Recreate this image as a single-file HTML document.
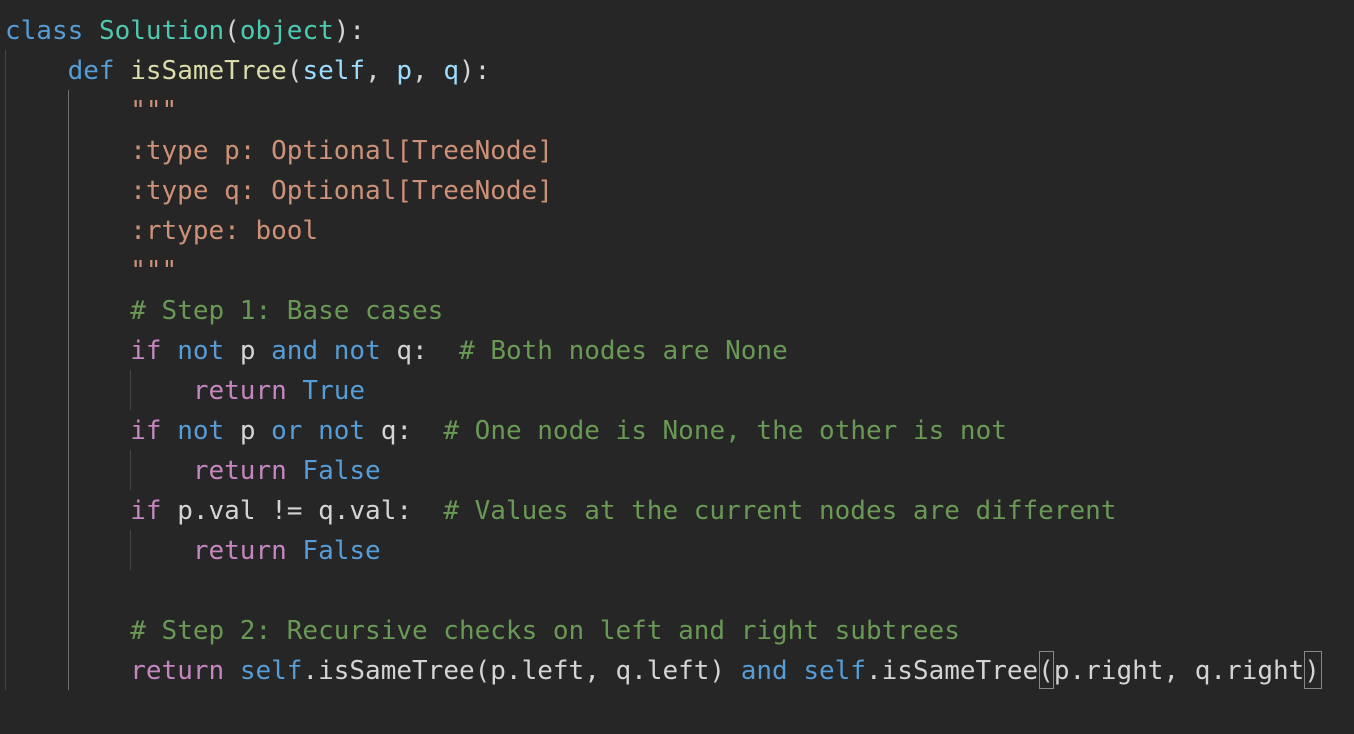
<!DOCTYPE html>
<html><head><style>
html,body{margin:0;padding:0;background:#262626;width:1354px;height:734px;overflow:hidden}
pre{margin:0;position:absolute;left:5px;top:11px;font-family:"DejaVu Sans Mono","Liberation Mono",monospace;font-size:26px;line-height:40px;color:#d4d4d4}
.k{color:#569cd6}.c{color:#4ec9b0}.f{color:#dcdcaa}.v{color:#9cdcfe}.s{color:#ce9178}.g{color:#6a9955}.p{color:#c586c0}
.gl{position:absolute;width:1px;background:#474747}
.bx{position:absolute;border:1px solid #888;box-sizing:border-box;height:38px;top:651px}
</style></head><body>
<div class="gl" style="left:5px;top:50px;height:640px"></div>
<div class="gl" style="left:68px;top:90px;height:600px;background:#707070"></div>
<div class="gl" style="left:130px;top:370px;height:40px"></div>
<div class="gl" style="left:130px;top:450px;height:40px"></div>
<div class="gl" style="left:130px;top:530px;height:40px"></div>
<div class="bx" style="left:1039px;width:15px"></div>
<div class="bx" style="left:1304px;width:18px"></div>
<pre><span class="k">class</span> <span class="c">Solution</span>(<span class="c">object</span>):
    <span class="k">def</span> <span class="f">isSameTree</span>(<span class="v">self</span>, <span class="v">p</span>, <span class="v">q</span>):
        <span class="s">"""</span>
<span class="s">        :type p: Optional[TreeNode]</span>
<span class="s">        :type q: Optional[TreeNode]</span>
<span class="s">        :rtype: bool</span>
<span class="s">        """</span>
        <span class="g"># Step 1: Base cases</span>
        <span class="p">if</span> <span class="k">not</span> p <span class="k">and</span> <span class="k">not</span> q:  <span class="g"># Both nodes are None</span>
            <span class="p">return</span> <span class="k">True</span>
        <span class="p">if</span> <span class="k">not</span> p <span class="k">or</span> <span class="k">not</span> q:  <span class="g"># One node is None, the other is not</span>
            <span class="p">return</span> <span class="k">False</span>
        <span class="p">if</span> p.val != q.val:  <span class="g"># Values at the current nodes are different</span>
            <span class="p">return</span> <span class="k">False</span>

        <span class="g"># Step 2: Recursive checks on left and right subtrees</span>
        <span class="p">return</span> <span class="k">self</span>.isSameTree(p.left, q.left) <span class="k">and</span> <span class="k">self</span>.isSameTree(p.right, q.right)</pre>
</body></html>
